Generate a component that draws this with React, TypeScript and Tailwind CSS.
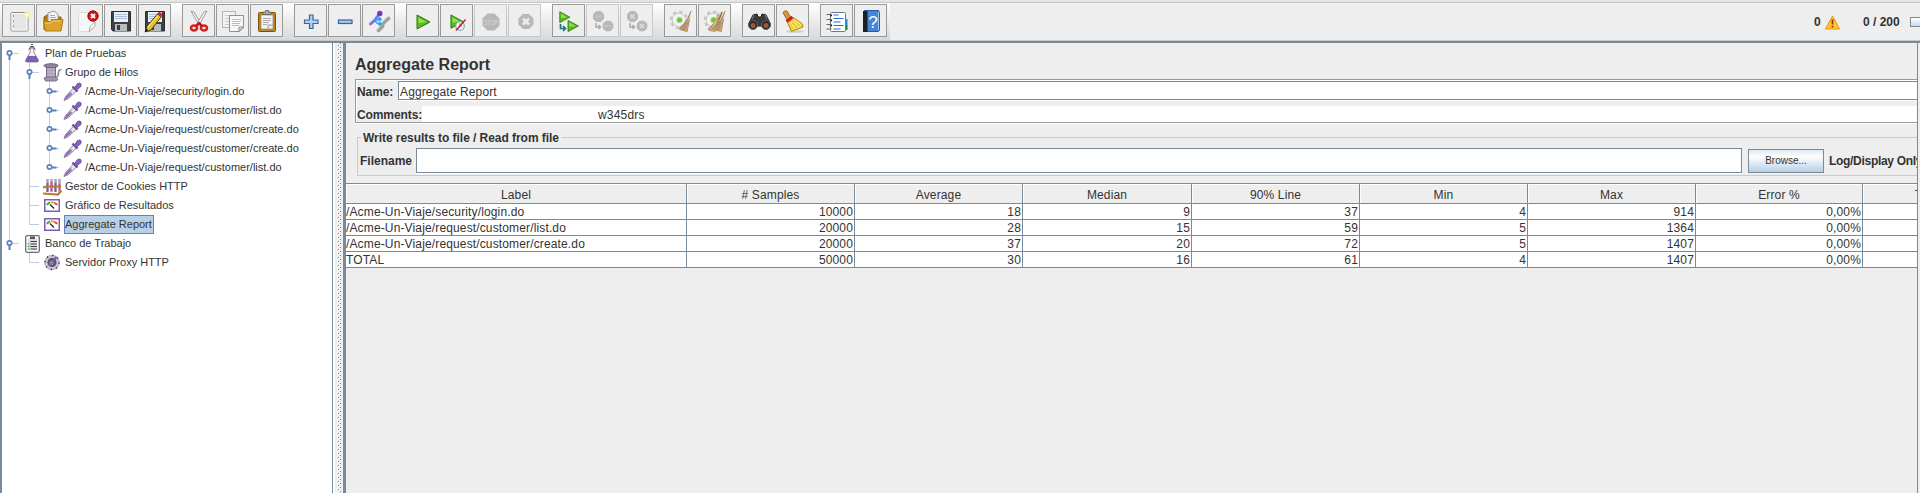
import React from "react";

type P = { children: React.ReactNode };
const I = ({ children }: P) => (
  <svg width="24" height="24" viewBox="0 0 24 24" className="block">{children}</svg>
);

const NewIcon = () => (
  <I>
    <rect x="4" y="3.500" width="17" height="18.500" rx="1" fill="#e6e6e6" stroke="#8a8a86" />
    <rect x="5" y="4.500" width="15" height="16.500" fill="none" stroke="#fafafa" />
    <path d="M6.500 6v2M6.500 11v2M6.500 16v2" stroke="#999" />
    <circle cx="20" cy="6" r="3.600" fill="#f7ee8a" opacity=".8" />
    <circle cx="20" cy="6" r="1.800" fill="#fffde0" />
  </I>
);
const OpenIcon = () => (
  <I>
    <path d="M3 21V8l3-2h5l1 2h8v6" fill="#b47a10" stroke="#8f5f08" />
    <path d="M7 4l6-2 4 3v9H7z" fill="#f4f4f4" stroke="#9a9a9a" />
    <path d="M9 6.500h5M9 8.500h6M9 10.500h6" stroke="#aaa" />
    <path d="M2.500 12.500h7l2-2h10.500l-2 11.500H4.500z" fill="#dba32b" stroke="#b07a12" />
    <path d="M4 14h6l2-2h8" stroke="#f2cd6d" fill="none" />
  </I>
);
const CloseIcon = () => (
  <I>
    <path d="M3.500 3.500h16v14l-4 5h-12z" fill="#f7f7f7" stroke="#dcdcdc" />
    <path d="M20 13v4l-6 5.500 1.500-5.500z" fill="#fff" stroke="#999" strokeWidth=".8" />
    <circle cx="18" cy="7" r="5.200" fill="#cf1515" stroke="#8e0b0b" />
    <path d="M16 5l4 4M20 5l-4 4" stroke="#fff" strokeWidth="2" />
  </I>
);
const Disk = () => (
  <>
    <path d="M2.500 2.500h19v19.500H4L2.500 20.500z" fill="#3b4045" stroke="#2a2d30" />
    <rect x="5" y="3" width="14" height="10" fill="#eaf1f8" />
    <path d="M6 5.500h12M6 7.500h12M6 9.500h12" stroke="#a9bfd6" />
    <rect x="6" y="15" width="12" height="7" fill="#b9bcbe" />
    <rect x="8" y="16" width="3" height="5" fill="#3a3d40" />
  </>
);
const SaveIcon = () => <I><Disk /></I>;
const SaveAsIcon = () => (
  <I>
    <Disk />
    <path d="M2 23l2-6L15 4.500l3.500 3L8 21z" fill="#e9bf2d" stroke="#4b3b10" />
    <path d="M5 18L15.500 6" stroke="#fff0a0" />
    <path d="M14.500 5l2-2 3 2.500-2 2z" fill="#d92b2b" stroke="#8c1010" strokeWidth=".6" />
    <path d="M2 23l1.200-3.500 2 1.700z" fill="#111" />
  </I>
);
const CutIcon = () => (
  <I>
    <path d="M4 2l3 1 8 13-2.500 1z" fill="#eee" stroke="#888" strokeWidth=".8" />
    <path d="M20 2l-3 1-8 13 2.500 1z" fill="#f6f6f6" stroke="#888" strokeWidth=".8" />
    <ellipse cx="7" cy="19" rx="3" ry="2.500" fill="none" stroke="#d81e1e" strokeWidth="2.600" />
    <ellipse cx="17" cy="19" rx="3" ry="2.500" fill="none" stroke="#d81e1e" strokeWidth="2.600" />
    <path d="M9 17l3-3 3 3" stroke="#c21010" strokeWidth="2" fill="none" />
  </I>
);
const CopyIcon = () => (
  <I>
    <rect x="1.500" y="2.500" width="13" height="16" fill="#f2f2f2" stroke="#b4b4b4" />
    <path d="M4 6.500h8M4 9.500h4M4 12.500h4M4 15.500h4" stroke="#ccc" />
    <path d="M8.500 6.500h14v12l-4 4h-10z" fill="#f7f7f7" stroke="#909090" />
    <path d="M11 10.500h9M11 12.500h9M11 14.500h8M11 16.500h7" stroke="#bdbdbd" />
    <path d="M18 22.500v-4.500h4.500z" fill="#ddd" stroke="#909090" />
  </I>
);
const PasteIcon = () => (
  <I>
    <rect x="3.500" y="3.500" width="17" height="19" rx="1" fill="#c08422" stroke="#7c5008" />
    <path d="M6 6h12v14H6z" fill="#f4f4f2" stroke="#8a8a80" strokeWidth=".7" />
    <path d="M8 5.500V3h2.500V1.500h3V3H16v2.500z" fill="#a9a99f" stroke="#5f5f58" strokeWidth=".8" />
    <path d="M8 9.500h8M8 11.500h8M8 13.500h6M8 15.500h4" stroke="#aaa" />
    <path d="M13 20v-4h5" fill="#ddd" stroke="#888" strokeWidth=".7" />
  </I>
);
const PlusIcon = () => (
  <I><path d="M10.500 6h3.500v5h5v3.500h-5v5h-3.500v-5h-5V11h5z" fill="#b5d0ee" stroke="#3465a4" strokeWidth="1.200" /></I>
);
const MinusIcon = () => (
  <I><rect x="5.500" y="11" width="13.500" height="3.500" fill="#a9c9ee" stroke="#3465a4" strokeWidth="1.200" /></I>
);
const ToggleIcon = () => (
  <I>
    <path d="M11.500 21.500l4-4 .5-3 5.500-5" stroke="#a0a0a0" strokeWidth="3.600" fill="none" strokeLinecap="round" strokeLinejoin="round" />
    <path d="M3.500 15l4.500-4 3.500-5" stroke="#8f6be0" strokeWidth="3" fill="none" strokeLinecap="round" />
    <circle cx="12.800" cy="4.500" r="2.700" fill="#7038c4" />
    <path d="M7.500 10l6.500 6M14 9l-5 5" stroke="#28a4f6" strokeWidth="3.200" />
    <circle cx="11" cy="12.500" r="1.600" fill="#a8dcff" />
  </I>
);
const Tri = ({ x = 0, y = 0, s = 1 }: { x?: number; y?: number; s?: number }) => (
  <g transform={`translate(${x} ${y}) scale(${s})`}>
    <path d="M1 .5L14 7.500 1 14.500z" fill="#58bd1c" stroke="#2f6f1b" strokeLinejoin="round" />
    <path d="M2.500 3l8 4.500-8 1z" fill="#93e04e" />
  </g>
);
const StartIcon = () => <I><Tri x={5} y={5.500} /></I>;
const StartNoIcon = () => (
  <I>
    <Tri x={5} y={5.500} s={0.95} />
    <circle cx="15" cy="17" r="4.300" fill="#f4faff" stroke="#7fa6c9" strokeWidth="1.200" />
    <path d="M15 14.500V17h2" stroke="#567" fill="none" />
    <path d="M11 21.500L20.500 10.500" stroke="#d01818" strokeWidth="1.400" />
  </I>
);
const Oct = ({ x, y, r }: { x: number; y: number; r: number }) => (
  <g transform={`translate(${x} ${y}) scale(${r / 8})`}>
    <path d="M-3.300-8h6.600L8-3.300v6.600L3.300 8h-6.600L-8 3.300v-6.600z" fill="#b8b8b8" />
  </g>
);
const StopIcon = () => (
  <I>
    <Oct x={12} y={13} r={8.500} />
    <text x="12" y="16" fontSize="7.500" textAnchor="middle" fill="#d6d6d6" className="font-['Liberation_Sans']" textLength="14" lengthAdjust="spacingAndGlyphs">STOP</text>
  </I>
);
const ShutIcon = () => (
  <I>
    <Oct x={13} y={12.500} r={7.500} />
    <path d="M10 9.500l6 6M16 9.500l-6 6" stroke="#ececec" strokeWidth="2.500" />
  </I>
);
const RemoteStart = () => (
  <I>
    <Tri x={2} y={2.300} s={0.78} />
    <Tri x={10.200} y={11} s={0.8} />
    <path d="M3.500 15v4.500H8M6 17l2.500 2.500L6 22" stroke="#22717a" strokeWidth="1.700" fill="none" />
  </I>
);
const RemotePair = ({ x }: { x?: boolean }) => (
  <I>
    <Oct x={7.500} y={7.500} r={5.500} />
    <Oct x={17} y={17} r={5.300} />
    <path d="M5 14v4h4M7.500 16l2 2-2 2" stroke="#aaa" strokeWidth="1.500" fill="none" />
    {x ? (
      <path d="M5.500 5.500l4 4M9.500 5.500l-4 4M15 15l4 4M19 15l-4 4" stroke="#dedede" strokeWidth="1.600" />
    ) : (
      <path d="M4 7.500h7M13.500 17h7" stroke="#c6c6c6" strokeWidth="2" strokeDasharray="1.500 .5" />
    )}
  </I>
);
const ClearIcon = ({ two }: { two?: boolean }) => (
  <I>
    <circle cx="10" cy="11" r="8" fill="none" stroke="#c4c4c4" strokeWidth="2.500" strokeDasharray="3.200 3.080" />
    <circle cx="10" cy="11" r="6.800" fill="#f3f3f3" stroke="#c4c4c4" />
    <circle cx="10.500" cy="11" r="3.600" fill="#dcdcdc" />
    <circle cx="10.500" cy="11" r="2.500" fill="#68cf22" />
    {two && <path d="M15.500 3l-4 10-7 7 2 2 6 1 4-9z" fill="#b9956b" />}
    {two && <path d="M15 7l-4 9-4 5M13 13l-3 9" stroke="#dcc09a" fill="none" />}
    <path d="M22 2l-4 9-8 9 2 1.500 6 1.500 2-11z" fill="#b9956b" />
    <path d="M22 2l-3 10-5 8.500M20 13l-3 9.500" stroke="#e0c49c" fill="none" strokeWidth=".8" />
    <path d="M22 2l-4 9-8 9M20.500 10l-2.500 13M18 13l-4 8" stroke="#94704a" fill="none" strokeWidth=".7" />
    {two && <path d="M19 3l-3 8" stroke="#94704a" strokeWidth="1.500" />}
  </I>
);
const BinocIcon = () => (
  <I>
    <path d="M2 14l4-8 4-1 1 3h3l1-3 4 1 4 8v3H2z" fill="#3a3a3a" stroke="#1d1d1d" />
    <path d="M5 10l2-4M20 10l-2-4" stroke="#888" />
    <circle cx="6" cy="16" r="4.500" fill="#292929" stroke="#606060" />
    <circle cx="19" cy="16" r="4.500" fill="#292929" stroke="#606060" />
    <circle cx="6" cy="16.500" r="2.500" fill="#a2582c" />
    <circle cx="19" cy="16.500" r="2.500" fill="#a2582c" />
  </I>
);
const BroomIcon = () => (
  <I>
    <ellipse cx="14" cy="22.500" rx="9" ry="1.300" fill="#cfcfcf" />
    <path d="M2 4q1-3 4-2l4 7-3.500 2.500z" fill="#d09a3c" stroke="#8d5a10" strokeWidth=".8" />
    <path d="M6.500 13.500l6-5 9 6.500.5 3-11.500 4.500z" fill="#efcf32" stroke="#b28f0c" />
    <path d="M9.500 13l4.500 7M12 11.500l6 7M14 11l6 5" stroke="#fff2a0" />
    <path d="M5.500 12.500l6-4.500" stroke="#d21d1d" strokeWidth="3" />
  </I>
);
const ListIcon = () => (
  <I>
    <rect x="18" y="10" width="4.500" height="6" fill="#2a86e8" />
    <rect x="18" y="16" width="4.500" height="5" fill="#168a1e" />
    <rect x="5.500" y="3.500" width="15" height="19" rx="1" fill="#fff" stroke="#777" />
    <path d="M8.500 6h5M8.500 9.500h10M8.500 13h7M8.500 16.500h10M8.500 20h7" stroke="#2271dd" strokeWidth="1.200" />
    <path d="M1.500 5.500h5M1.500 10.500h5M1.500 15.500h5M1.500 20h5" stroke="#666" strokeWidth="1.200" />
    <path d="M5.500 6.500h1.500M5.500 11.500h1.500M5.500 16.500h1.500" stroke="#111" strokeWidth="1.500" />
  </I>
);
const HelpIcon = () => (
  <I>
    <path d="M4.500 2.500l1-1h14l1 2v18l-1 1h-15z" fill="#4585d8" stroke="#2c5a9c" />
    <path d="M4 2h4.500v21H4z" fill="#1b1f26" />
    <path d="M19.500 3v18" stroke="#a9cbf3" />
    <text x="14" y="18.500" fontSize="17" textAnchor="middle" fill="#fff" className="font-['Liberation_Sans']">?</text>
  </I>
);

const groups: { off?: number[]; icons: React.ReactNode[] }[] = [
  { icons: [<NewIcon />, <OpenIcon />, <CloseIcon />, <SaveIcon />, <SaveAsIcon />] },
  { icons: [<CutIcon />, <CopyIcon />, <PasteIcon />] },
  { icons: [<PlusIcon />, <MinusIcon />, <ToggleIcon />] },
  { icons: [<StartIcon />, <StartNoIcon />, <StopIcon />, <ShutIcon />], off: [2, 3] },
  { icons: [<RemoteStart />, <RemotePair />, <RemotePair x />], off: [1, 2] },
  { icons: [<ClearIcon />, <ClearIcon two />] },
  { icons: [<BinocIcon />, <BroomIcon />] },
  { icons: [<ListIcon />, <HelpIcon />] },
];

function Toolbar() {
  return (
    <div className="flex h-[41px] shrink-0 flex-col">
      <div className="h-[2px] bg-[#e4e4e4]" />
      <div className="h-px bg-[#c4c4c4]" />
      <div className="flex h-[37px] items-stretch">
        <div className="flex w-[890px] shrink-0 gap-[11px] bg-linear-to-b from-white to-[#d8d8d8] pt-px pb-[3px] pl-[2px]">
          {groups.map((g, i) => (
            <div key={i} className="flex gap-px">
              {g.icons.map((ic, j) => (
                <div
                  key={j}
                  className={`flex size-[33px] items-center justify-center border bg-[#eee] ${g.off?.includes(j) ? "border-[#c8c8c8]" : "border-[#999]"}`}
                >
                  {ic}
                </div>
              ))}
            </div>
          ))}
        </div>
        <div className="flex grow items-center pt-px text-[12px] font-bold">
          <span className="ml-[924px] w-[7px]">0</span>
          <svg width="15" height="15" viewBox="0 0 15 15" className="ml-[4px]">
            <path d="M7.500 1L14.500 14H.5z" fill="#fcc927" stroke="#ef8d15" strokeLinejoin="round" />
            <path d="M7.500 4.500v5M7.500 10.800v1.700" stroke="#8a3a0a" strokeWidth="1.700" />
          </svg>
          <span className="ml-[23px] w-[37px] whitespace-nowrap">0 / 200</span>
          <span className="ml-[10px] h-[10px] w-[10px] border border-r-0 border-[#7a8a99] bg-linear-to-b from-white to-[#c8d8ea]" />
        </div>
      </div>
      <div className="h-px bg-[#c8c8c8]" />
    </div>
  );
}

const FlaskIcon = () => (
  <svg width="16" height="19" viewBox="0 0 16 19">
    <path d="M6 3v5.500L1.500 16.500q0 1.500 1.500 1.500h10q1.500 0 1.500-1.500L10 8.500V3" fill="#f2f0f6" stroke="#8f889c" />
    <path d="M3.800 12h8.400l2.300 4.500q0 1.500-1.500 1.500H3q-1.500 0-1.500-1.500z" fill="#7f5fb4" />
    <path d="M4.500 5.500Q8 2 11.500 5.500M6 2.500h4M7 .5h2" stroke="#555" fill="none" />
  </svg>
);
const SpoolIcon = () => (
  <svg width="19" height="19" viewBox="0 0 19 19">
    <path d="M3 3h10v13H3z" fill="#a79db6" />
    <path d="M4 6h8M4 9h8M4 12h8" stroke="#c9c2d4" />
    <path d="M3.500 3v13M12.500 3v13" stroke="#756b88" />
    <ellipse cx="8" cy="2.700" rx="7" ry="2" fill="#8f859c" stroke="#6c6478" />
    <path d="M1 15l2-1h10l2 2.500-2 1.500H2.500z" fill="#9f95b0" stroke="#7c7488" />
    <path d="M13 14q2.500 0 2.500-4t3-3" stroke="#8a7f9c" strokeWidth="1.600" fill="none" />
  </svg>
);
const DropperIcon = () => (
  <svg width="19" height="19" viewBox="0 0 19 19">
    <path d="M1 18.500l1.500-4L11 5.500l3 3-8.500 8z" fill="#e9e7ee" stroke="#8b839b" />
    <path d="M1 18.500l2-4 5-4.500 1 2-4 4z" fill="#8a6cbc" />
    <path d="M9.500 4.500l5 5" stroke="#6b4fa0" strokeWidth="2.400" />
    <path d="M11.500 6l3-4.500 2.500-.5 1 1 0 2.500-4.500 3.500z" fill="#8463ba" stroke="#7553ae" />
  </svg>
);
const CookieIcon = () => (
  <svg width="19" height="18" viewBox="0 0 19 18">
    <path d="M4.500 1v13M8.500 1v13M12.500 1v13M16.500 1v13" stroke="#aaa4bd" strokeWidth="2.600" />
    <path d="M4.500 5v9M12.500 5v9" stroke="#7554b0" strokeWidth="1.700" />
    <path d="M8.500 4v9M16.500 6v6" stroke="#e04a6a" strokeWidth="1.700" />
    <path d="M0 9.500l4-1h14M0 15.500l15 1 3.500-4" stroke="#c4763a" strokeWidth="2.200" fill="none" />
  </svg>
);
const GaugeIcon = () => (
  <svg width="16" height="13" viewBox="0 0 16 13">
    <rect x=".75" y=".75" width="14.500" height="11.500" fill="#fff" stroke="#7a5fae" strokeWidth="1.500" />
    <path d="M3 6Q4 4 6 3.500" stroke="#35b04a" strokeWidth="2" fill="none" />
    <path d="M6.500 3.500q2.500-.5 4 .5" stroke="#f0a040" strokeWidth="2" fill="none" />
    <path d="M10.500 4q2 .8 2.500 2" stroke="#e8503c" strokeWidth="2" fill="none" />
    <path d="M6 5.500l4 4" stroke="#222" strokeWidth="1.300" />
  </svg>
);
const ClipIcon = () => (
  <svg width="15" height="18" viewBox="0 0 15 18">
    <rect x=".7" y=".7" width="13.600" height="16.600" rx="1.500" fill="#fff" stroke="#6d6580" strokeWidth="1.300" />
    <path d="M3 3.500h9v12H3z" fill="#dedce3" />
    <path d="M5 1.500h5v2.500H5z" fill="#555" />
    <path d="M5.500 6.500H12M5.500 9H12M5.500 11.500H12M5.500 14H12" stroke="#444" />
    <path d="M2.500 9h2M2.500 11.500h2M2.500 14h2" stroke="#4aa84a" />
  </svg>
);
const ProxyIcon = () => (
  <svg width="16" height="17" viewBox="0 0 16 17">
    <circle cx="8" cy="8.500" r="7.300" fill="#c9c3d6" stroke="#b3adc2" />
    <circle cx="8" cy="8.500" r="7" fill="none" stroke="#222" strokeWidth="1.300" strokeDasharray="1.200 4.300" />
    <circle cx="8" cy="8.500" r="4.500" fill="#5c5470" />
    <path d="M8 8l4.500-5" stroke="#6f60a0" strokeWidth="2" />
    <circle cx="7.500" cy="9" r="2.300" fill="#8b819e" />
  </svg>
);

type Row = { depth: number; text: string; icon: React.ReactNode; handle?: "open" | "shut"; sel?: boolean; last?: boolean };

const rows: Row[] = [
  { depth: 0, text: "Plan de Pruebas", icon: <FlaskIcon />, handle: "open" },
  { depth: 1, text: "Grupo de Hilos", icon: <SpoolIcon />, handle: "open" },
  { depth: 2, text: "/Acme-Un-Viaje/security/login.do", icon: <DropperIcon />, handle: "shut" },
  { depth: 2, text: "/Acme-Un-Viaje/request/customer/list.do", icon: <DropperIcon />, handle: "shut" },
  { depth: 2, text: "/Acme-Un-Viaje/request/customer/create.do", icon: <DropperIcon />, handle: "shut" },
  { depth: 2, text: "/Acme-Un-Viaje/request/customer/create.do", icon: <DropperIcon />, handle: "shut" },
  { depth: 2, text: "/Acme-Un-Viaje/request/customer/list.do", icon: <DropperIcon />, handle: "shut", last: true },
  { depth: 1, text: "Gestor de Cookies HTTP", icon: <CookieIcon /> },
  { depth: 1, text: "Gráfico de Resultados", icon: <GaugeIcon /> },
  { depth: 1, text: "Aggregate Report", icon: <GaugeIcon />, sel: true, last: true },
  { depth: 0, text: "Banco de Trabajo", icon: <ClipIcon />, handle: "open", last: true },
  { depth: 1, text: "Servidor Proxy HTTP", icon: <ProxyIcon />, last: true },
];

function Guide({ r, i }: { r: Row; i: number }) {
  const cx = 7.5 + r.depth * 20;
  const end = r.last ? "v9.500" : "v19";
  return (
    <svg width={18 + r.depth * 20} height="19" className="shrink-0">
      <g stroke="#b8cfe5" fill="none">
        {i > 0 && i < 10 && <path d="M7.500 0v19" />}
        {i === 0 && <path d="M7.500 10v9" />}
        {i === 10 && <path d="M7.500 0v9" />}
        {r.depth > 1 && <path d="M27.500 0v19" />}
        {r.depth > 0 && <path d={`M${cx} 0${end}`} />}
        <path d={`M${cx} 9.500h9.500`} />
      </g>
      {r.handle && (
        <g stroke="#5b82bd" strokeWidth="2">
          {r.handle === "open" ? <path d={`M${cx} 10v6`} /> : <path d={`M${cx} 9.500h7`} />}
          <circle cx={cx} cy="9" r="2.200" fill="#fff" strokeWidth="1.700" />
        </g>
      )}
    </svg>
  );
}

function Tree() {
  return (
    <div className="flex w-[333px] shrink-0 flex-col border-r border-l-2 border-[#7a8a99] bg-white pt-px">
      {rows.map((r, i) => (
        <div key={i} className="flex h-[19px] items-center">
          <Guide r={r} i={i} />
          <div className="ml-[2px] flex w-[20px] shrink-0 items-center justify-center">{r.icon}</div>
          <div className={`ml-[2px] flex h-[19px] shrink-0 items-center border text-[11px] leading-[17px] whitespace-nowrap ${r.sel ? "w-[90px] border-[#6382bf] bg-[#b8cfe5]" : "border-transparent"}`}>
            {r.text}
          </div>
        </div>
      ))}
    </div>
  );
}

function Divider() {
  return (
    <div className="w-[10px] shrink-0 border-l-2 border-white bg-[#eee]">
      <svg width="8" height="450" className="block">
        <defs>
          <pattern id="bumps" width="8" height="4" patternUnits="userSpaceOnUse">
            <rect x="2" y="1" width="1" height="1" fill="#fff" />
            <rect x="3" y="2" width="1" height="1" fill="#7a8a99" />
            <rect x="4" y="3" width="1" height="1" fill="#fff" />
            <rect x="5" y="0" width="1" height="1" fill="#7a8a99" />
          </pattern>
        </defs>
        <rect width="8" height="450" fill="url(#bumps)" />
      </svg>
    </div>
  );
}

const cols = ["Label", "# Samples", "Average", "Median", "90% Line", "Min", "Max", "Error %", "Throughput"];
const data = [
  ["/Acme-Un-Viaje/security/login.do", "10000", "18", "9", "37", "4", "914", "0,00%", ""],
  ["/Acme-Un-Viaje/request/customer/list.do", "20000", "28", "15", "59", "5", "1364", "0,00%", ""],
  ["/Acme-Un-Viaje/request/customer/create.do", "20000", "37", "20", "72", "5", "1407", "0,00%", ""],
  ["TOTAL", "50000", "30", "16", "61", "4", "1407", "0,00%", ""],
];
const grid = "grid w-[1685px] grid-cols-[341px_168px_168px_169px_168px_168px_168px_167px_168px]";

function Report() {
  return (
    <div className="flex w-[1575px] shrink-0 flex-col overflow-hidden border-r border-l-3 border-[#7a8a99] bg-[#eee]">
      <h1 className="mt-[12px] ml-[9px] h-[20px] text-[16px] leading-[20px] font-bold">Aggregate Report</h1>
      <div className="mt-[4px] ml-[9px] flex h-[44px] w-[1600px] flex-col border border-[#999] pt-px shadow-[inset_1px_1px_0_#fff,0_1px_0_#fff]">
        <div className="flex h-[19px]">
          <b className="w-[42px] pl-px leading-[22px] tracking-[-0.1px]">Name:</b>
          <div className="grow border border-[#7a8a99] bg-white pl-px leading-[20px] tracking-[0.13px] shadow-[0_1px_0_#fff]">Aggregate Report</div>
        </div>
        <div className="mt-[6px] flex h-[16px]">
          <b className="w-[66px] pl-px leading-[18px] tracking-[-0.1px]">Comments:</b>
          <div className="grow bg-white pl-[176px] leading-[18px] tracking-[0.2px]">w345drs</div>
        </div>
      </div>
      <fieldset className="mt-[7px] ml-[11px] h-[46px] w-[1600px] shrink-0 border border-[#b8cfe5]">
        <legend className="ml-[3px] h-[15px] px-[2px] leading-[16px] font-bold tracking-[-0.05px]">Write results to file / Read from file</legend>
        <div className="mt-[3px] ml-[2px] flex h-[25px]">
          <b className="w-[56px] shrink-0 leading-[26px]">Filename</b>
          <div className="w-[1326px] shrink-0 border border-[#7a8a99] bg-white shadow-[0_1px_0_#fff]" />
          <div className="mt-px ml-[6px] flex h-[24px] w-[76px] shrink-0 items-center justify-center border border-[#7a8a99] bg-linear-to-b from-[#dde8f3] via-white via-30% to-[#b8cfe5] text-[10px]">Browse...</div>
          <b className="ml-[5px] leading-[26px] tracking-[-0.3px] whitespace-nowrap">Log/Display Only:</b>
        </div>
      </fieldset>
      <div className="mt-[7px] shrink-0 border-t border-[#7a8a99] tracking-[0.14px]">
        <div className={grid}>
          {cols.map((c) => (
            <div key={c} className="h-[20px] border-r border-b border-[#7a8a99] text-center leading-[22px] shadow-[inset_1px_1px_0_#fff]">{c}</div>
          ))}
        </div>
        {data.map((d, i) => (
          <div key={i} className={grid}>
            {d.map((v, j) => (
              <div key={j} className={`h-[16px] border-r border-b border-[#7a8a99] bg-white leading-[16px] whitespace-nowrap ${j ? "pr-px text-right" : "text-left"}`}>{v}</div>
            ))}
          </div>
        ))}
      </div>
    </div>
  );
}

export default function App() {
  return (
    <div className="flex h-[493px] w-[1920px] flex-col overflow-hidden bg-[#eee] font-['Liberation_Sans',Arial,sans-serif] text-[12px] leading-[16px] text-[#333]">
      <Toolbar />
      <div className="h-[2px] shrink-0 bg-[#7a8a99]" />
      <div className="flex min-h-0 grow">
        <Tree />
        <Divider />
        <Report />
      </div>
    </div>
  );
}
